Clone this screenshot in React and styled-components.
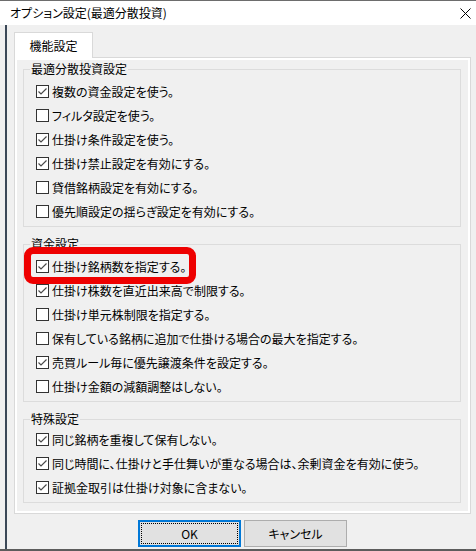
import React from 'react';
import styled, { createGlobalStyle } from 'styled-components';

const groups = [
  {
    title: '最適分散投資設定',
    items: [
      { label: '複数の資金設定を使う。', checked: true },
      { label: 'フィルタ設定を使う。', checked: false },
      { label: '仕掛け条件設定を使う。', checked: true },
      { label: '仕掛け禁止設定を有効にする。', checked: true },
      { label: '貸借銘柄設定を有効にする。', checked: false },
      { label: '優先順設定の揺らぎ設定を有効にする。', checked: false },
    ],
  },
  {
    title: '資金設定',
    items: [
      { label: '仕掛け銘柄数を指定する。', checked: true, marked: true },
      { label: '仕掛け株数を直近出来高で制限する。', checked: true },
      { label: '仕掛け単元株制限を指定する。', checked: false },
      { label: '保有している銘柄に追加で仕掛ける場合の最大を指定する。', checked: false },
      { label: '売買ルール毎に優先譲渡条件を設定する。', checked: true },
      { label: '仕掛け金額の減額調整はしない。', checked: false },
    ],
  },
  {
    title: '特殊設定',
    tight: true,
    items: [
      { label: '同じ銘柄を重複して保有しない。', checked: true },
      { label: '同じ時間に、仕掛けと手仕舞いが重なる場合は、余剰資金を有効に使う。', checked: true },
      { label: '証拠金取引は仕掛け対象に含まない。', checked: true },
    ],
  },
];

const GlobalStyle = createGlobalStyle`
  html, body {
    margin: 0;
    padding: 0;
    background: #f0f0f0;
  }
  body {
    font-family: "Noto Sans CJK JP", "Noto Sans", sans-serif;
    font-size: 12px;
    font-feature-settings: "palt";
    color: #000;
  }
`;

const Window = styled.div`
  width: 476px;
  height: 551px;
  box-sizing: border-box;
  border-top: 1px solid #6d6d6d;
  border-bottom: 2px solid #5c5c5c;
  display: flex;
  flex-direction: column;
  background: #f0f0f0;
  overflow: hidden;
`;

const TitleBar = styled.div`
  height: 24px;
  flex-shrink: 0;
  background: #fff;
  display: flex;
  align-items: center;
  justify-content: space-between;
  padding: 0 5px 0 10px;
`;

const Title = styled.span`
  line-height: 16px;
`;

const Client = styled.div`
  flex: 1;
  margin-left: 5px;
  border-left: 2px solid #3b4857;
  padding: 7px 5px 0 7px;
  display: flex;
  flex-direction: column;
`;

const TabStrip = styled.div`
  display: flex;
  position: relative;
  z-index: 1;
  margin-bottom: -1px;
`;

const Tab = styled.div`
  width: 79px;
  height: 26px;
  box-sizing: border-box;
  background: #fff;
  border: 1px solid #d9d9d9;
  border-bottom: none;
  display: flex;
  align-items: center;
  justify-content: center;
`;

const TabPage = styled.div`
  height: 457px;
  box-sizing: border-box;
  border: 1px solid #d9d9d9;
  box-shadow: inset 0 0 0 2px #fff;
  background: #f0f0f0;
  padding: 3px 9px 0 8px;
  display: flex;
  flex-direction: column;
  gap: 9px;
`;

const Group = styled.fieldset`
  margin: 0;
  border: 1px solid #dcdcdc;
  padding: ${(p) => (p.$tight ? '0' : '2px')} 0 3px 12px;
  min-width: 0;
`;

const Legend = styled.legend`
  padding: 0 1px;
  margin-left: -6px;
  line-height: 16px;
`;

const Row = styled.label`
  height: 24px;
  display: flex;
  align-items: center;
  gap: 3px;
  position: relative;
  white-space: nowrap;
`;

const Mark = styled.span`
  position: absolute;
  left: -12px;
  top: -7px;
  width: 172px;
  height: 37px;
  box-sizing: border-box;
  border: 7px solid #ee0000;
  border-radius: 9px;
  pointer-events: none;
`;

const Box = styled.svg`
  flex-shrink: 0;
  display: block;
`;

const Footer = styled.div`
  display: flex;
  justify-content: center;
  gap: 3px;
  margin-top: 6px;
`;

const Button = styled.div`
  width: 103px;
  height: 27px;
  box-sizing: border-box;
  background: #e1e1e1;
  border: ${(p) => (p.$default ? '2px solid #0078d7' : '1px solid #adadad')};
  display: flex;
  align-items: stretch;
  padding: ${(p) => (p.$default ? '1px' : '0')};
`;

const ButtonFace = styled.span`
  flex: 1;
  display: flex;
  align-items: center;
  justify-content: center;
  border: 1px dotted ${(p) => (p.$focus ? '#000' : 'transparent')};
`;

const CheckBox = ({ checked }) => (
  <Box width="13" height="13" viewBox="0 0 13 13">
    <rect x="0.5" y="0.5" width="12" height="12" fill="#fff" stroke="#333" />
    {checked && (
      <polyline points="2.5,6.5 5,9 10.5,3.5" fill="none" stroke="#4a4a4a" strokeWidth="1.2" />
    )}
  </Box>
);

const CloseIcon = () => (
  <svg width="11" height="11" viewBox="0 0 11 11">
    <path d="M0.5 0.5 L10.5 10.5 M10.5 0.5 L0.5 10.5" stroke="#000" strokeWidth="1" />
  </svg>
);

export default function App() {
  return (
    <>
      <GlobalStyle />
      <Window>
        <TitleBar>
          <Title>オプション設定(最適分散投資)</Title>
          <CloseIcon />
        </TitleBar>
        <Client>
          <TabStrip>
            <Tab>機能設定</Tab>
          </TabStrip>
          <TabPage>
            {groups.map((g) => (
              <Group key={g.title} $tight={g.tight}>
                <Legend>{g.title}</Legend>
                {g.items.map((it) => (
                  <Row key={it.label}>
                    {it.marked && <Mark />}
                    <CheckBox checked={it.checked} />
                    <span>{it.label}</span>
                  </Row>
                ))}
              </Group>
            ))}
          </TabPage>
          <Footer>
            <Button $default>
              <ButtonFace $focus>OK</ButtonFace>
            </Button>
            <Button>
              <ButtonFace>キャンセル</ButtonFace>
            </Button>
          </Footer>
        </Client>
      </Window>
    </>
  );
}
